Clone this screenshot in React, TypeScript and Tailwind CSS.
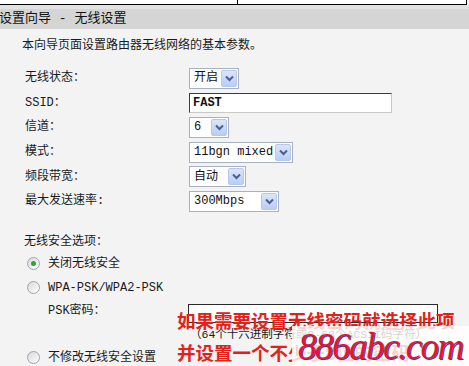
import React from 'react';

const mono = "font-['Liberation_Mono','Noto_Sans_CJK_SC',monospace]";

const Chevron: React.FC = () => (
    <span className="flex h-[17px] w-[16px] items-center justify-center rounded-[2px] border border-[#b6c7ee] bg-linear-to-b from-[#dbe5fb] to-[#b9cdf6]">
        <svg width="9" height="7" viewBox="0 0 9 7">
            <path d="M1 1.5l3.5 3.5L8 1.5" stroke="#4a5f8c" strokeWidth="2" fill="none" />
        </svg>
    </span>
);

const Select: React.FC<{ value: string; width: string }> = ({ value, width }) => (
    <div className={`flex h-[21px] items-center justify-between border border-[#a7b1bf] bg-white pl-[4px] pr-[1px] ${width}`}>
        <span className="text-[12px] leading-none text-[#111]">{value}</span>
        <Chevron />
    </div>
);

const Radio: React.FC<{ checked?: boolean }> = ({ checked }) => (
    <span className="flex h-[13px] w-[13px] items-center justify-center rounded-full border border-[#9ea5ac] bg-linear-to-br from-[#d8d8d8] to-white">
        {checked && <span className="h-[5px] w-[5px] rounded-full bg-[#2ea62e]" />}
    </span>
);

const rows: { label: string; field: React.ReactNode }[] = [
    { label: '无线状态：', field: <Select value="开启" width="w-[50px]" /> },
    {
        label: 'SSID：',
        field: (
            <div className="flex h-[20px] w-[203px] items-center border border-t-[#3c3c3c] border-l-[#3c3c3c] border-r-[#c8c8c8] border-b-[#c8c8c8] bg-white pl-[3px] text-[12px] font-bold text-[#111]">
                FAST
            </div>
        ),
    },
    { label: '信道：', field: <Select value="6" width="w-[40px]" /> },
    { label: '模式：', field: <Select value="11bgn mixed" width="w-[104px]" /> },
    { label: '频段带宽：', field: <Select value="自动" width="w-[57px]" /> },
    { label: '最大发送速率:', field: <Select value="300Mbps" width="w-[90px]" /> },
];

const App: React.FC = () => {
    return (
        <div className={`relative h-[366px] w-[469px] overflow-hidden bg-[#f3f3f3] text-[12px] text-[#1a1a1a] ${mono}`}>
            {/* frame edge above the panel */}
            <div className="relative h-[5px] w-[467px] border-r border-b border-black bg-white">
                <span className="absolute left-[237px] top-0 h-[4px] w-px bg-black" />
            </div>

            <header className="flex h-[24px] items-center border-t-[4px] border-[#e2e2e2] bg-[#d5d5d5] text-[13px] text-[#111]">
                <span className="-ml-[1px]">设置向导 - 无线设置</span>
            </header>

            <div className="pl-[22px] pt-[9px]">
                <p className="h-[16px] leading-[16px]">本向导页面设置路由器无线网络的基本参数。</p>

                <div className="mt-[12px] pl-[3px]">
                    {rows.map((r) => (
                        <div key={r.label} className="grid h-[24.6px] grid-cols-[164px_1fr] items-center">
                            <span>{r.label}</span>
                            <div>{r.field}</div>
                        </div>
                    ))}
                </div>

                <div className="mt-[17px] flex h-[22px] items-center pl-[2px]">无线安全选项：</div>
                <div className="flex h-[22px] items-center gap-[8px] pl-[5px]">
                    <Radio checked />
                    <span>关闭无线安全</span>
                </div>
                <div className="mt-[2px] flex h-[22px] items-center gap-[8px] pl-[5px]">
                    <Radio />
                    <span>WPA-PSK/WPA2-PSK</span>
                </div>
                <div className="grid h-[22px] grid-cols-[140px_1fr] items-center pl-[26px]">
                    <span>PSK密码：</span>
                    <div className="mt-[5px] h-[19px] w-[250px] border border-[#2a2a2a] bg-white" />
                </div>
                <div className="mt-[3px] flex h-[22px] items-center pl-[168px] text-[11.5px]">（64个十六进制字符或8-63个ACSII码字符）</div>
                <div className="mt-[1px] flex h-[22px] items-center gap-[8px] pl-[5px]">
                    <Radio />
                    <span>不修改无线安全设置</span>
                </div>
            </div>

            {/* annotation laid over the form */}
            <div className="absolute left-[177px] top-[306px] font-['Noto_Sans_CJK_SC',sans-serif] text-[18.5px] font-bold leading-[28px] text-[#e3211b]">
                <div>如果需要设置无线密码就选择此项</div>
                <div className="mt-[4px]">并设置一个不少于8位的密码</div>
            </div>

            {/* watermark */}
            <div className="absolute left-[292px] top-[326px] flex h-[40px] w-[177px] items-center bg-white/80 pl-[6px]">
                <span className="font-['Liberation_Serif',serif] text-[37px] italic leading-none tracking-[-1.5px] text-[#e3152c] [text-shadow:1px_1px_0_#3340a8]">
                    886abc.com
                </span>
            </div>
        </div>
    );
};

export default App;
